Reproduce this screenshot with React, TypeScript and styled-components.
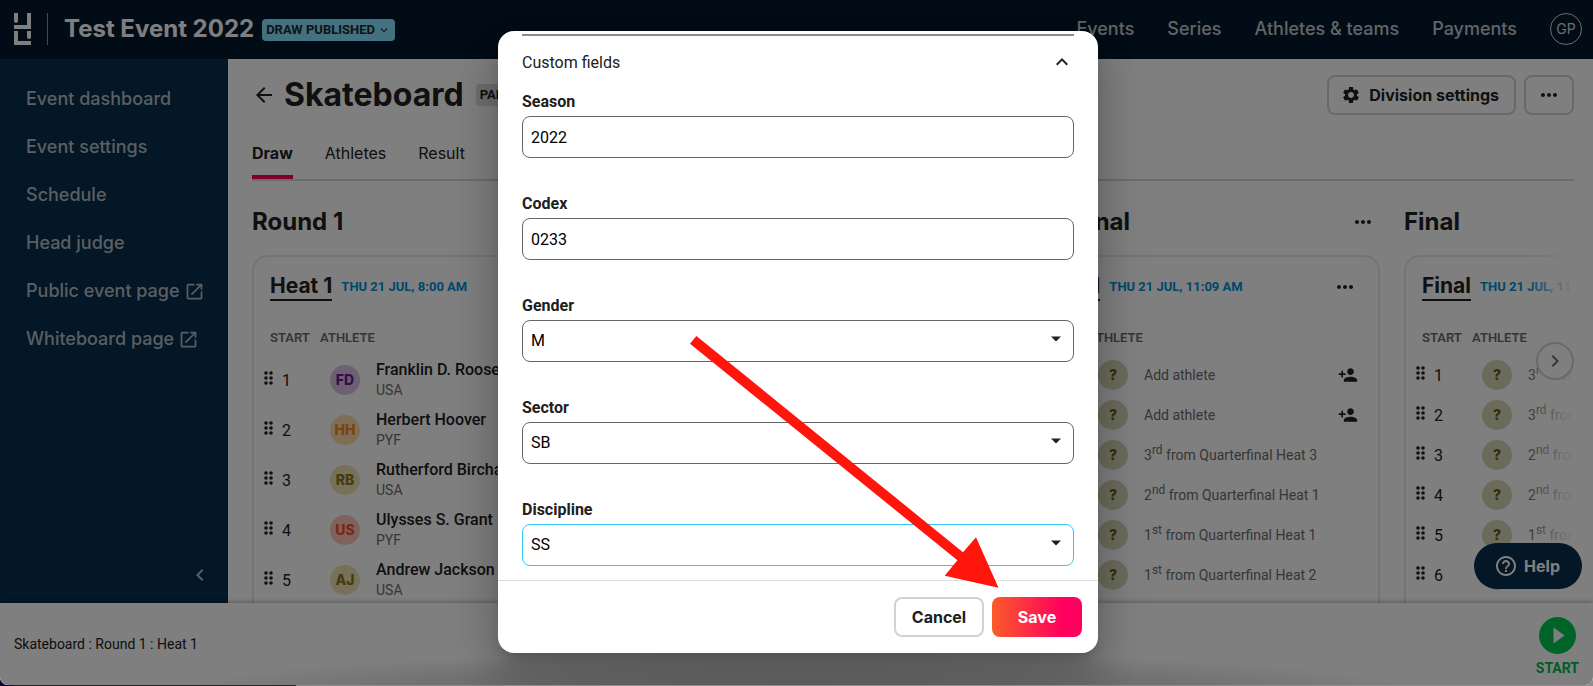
import React from "react";
import styled, { createGlobalStyle, css } from "styled-components";
import {
  MdSettings,
  MdPersonAdd,
  MdOpenInNew,
  MdArrowBack,
  MdMoreHoriz,
  MdChevronLeft,
  MdChevronRight,
  MdExpandLess,
  MdExpandMore,
  MdHelpOutline,
} from "react-icons/md";

const inter = `Inter, "Liberation Sans", sans-serif`;
const roboto = `Roboto, "Liberation Sans", sans-serif`;

const GlobalStyle = createGlobalStyle`
  *, *::before, *::after { box-sizing: border-box; }
  body { margin: 0; overflow: hidden; font-family: ${roboto}; font-size: 16px; color: #202020; }
  button { font: inherit; color: inherit; background: none; border: 0; padding: 0; cursor: pointer; }
  a { color: inherit; text-decoration: none; }
  h1, h2, h3, p { margin: 0; }
  svg { display: block; flex: none; }
`;

const Desktop = styled.div`
  height: 100vh;
  padding-bottom: 1px;
  background: linear-gradient(to right, #12082c 12px, #26262c 16px, #26262c 296px, #8c8c8c 296px);
`;

const AppWindow = styled.div`
  position: relative;
  display: grid;
  grid-template-rows: 59px minmax(0, 1fr) 82px;
  height: 100%;
  overflow: hidden;
  border-radius: 0 0 8px 8px;
  background: #fff;
`;

const Header = styled.header`
  display: flex;
  align-items: center;
  padding: 0 11px 2px 14px;
  background: #04182c;
  color: #fff;
  font-family: ${inter};
`;

const Divider = styled.span`
  width: 1px;
  height: 32px;
  margin: 0 16px 0 16px;
  background: #8d949c;
`;

const EventTitle = styled.h1`
  font-size: 24px;
  line-height: 32px;
  font-weight: 700;
  white-space: nowrap;
`;

const StatusBadge = styled.button`
  display: flex;
  align-items: center;
  gap: 2px;
  height: 22px;
  margin: 2px 0 0 8px;
  padding: 0 4px 0 4px;
  border-radius: 4px;
  background: #88e2ff;
  color: #20282c;
  font: 700 13px/22px ${roboto};
  white-space: nowrap;
`;

const TopNav = styled.nav`
  display: flex;
  align-items: center;
  gap: 33px;
  margin-left: auto;
  font-size: 18px;
  line-height: 24px;
  font-weight: 500;
  color: #c4c8cc;
  white-space: nowrap;
`;

const UserButton = styled.button`
  width: 32px;
  height: 32px;
  border: 1px solid #d6d9dc;
  border-radius: 50%;
  font: 400 14px/20px ${inter};
  color: #d6d9dc;
`;

const Middle = styled.div`
  display: grid;
  grid-template-columns: 228px minmax(0, 1fr);
  min-height: 0;
`;

const Sidebar = styled.nav`
  display: flex;
  flex-direction: column;
  padding: 16px 16px 16px 26px;
  background: #062e4c;
  color: #b4bec8;
  font: 500 18px/24px ${inter};
`;

const SideLink = styled.a`
  display: flex;
  align-items: center;
  gap: 4px;
  height: 48px;
  white-space: nowrap;
`;

const CollapseButton = styled.button`
  align-self: flex-end;
  margin-top: auto;
`;

const Main = styled.main`
  display: flex;
  flex-direction: column;
  min-width: 0;
  min-height: 0;
  padding: 0 19px 0 24px;
`;

const TitleRow = styled.div`
  display: flex;
  align-items: center;
  padding-top: 16px;
  font-family: ${inter};
`;

const DivisionTitle = styled.h2`
  margin: 0 12px 0 8px;
  font-size: 32px;
  line-height: 40px;
  font-weight: 700;
`;

const Tag = styled.span`
  padding: 0 4px;
  border-radius: 4px;
  background: #dcdcdc;
  font: 700 13px/22px ${roboto};
`;

const Actions = styled.div`
  display: flex;
  gap: 8px;
  margin-left: auto;
`;

const OutlineButton = styled.button<{ $square?: boolean }>`
  display: flex;
  align-items: center;
  justify-content: center;
  gap: 8px;
  height: 40px;
  padding: 0 ${(p) => (p.$square ? 11 : 15)}px 0 ${(p) => (p.$square ? 11 : 12)}px;
  border: 2px solid #d2d2d2;
  border-radius: 8px;
  font: 700 16px/24px ${inter};
  white-space: nowrap;
`;

const Tabs = styled.nav`
  display: flex;
  gap: 32px;
  height: 66px;
  border-bottom: 2px solid #d8d8d8;
  font-family: ${inter};
  line-height: 24px;
`;

const Tab = styled.a<{ $active?: boolean }>`
  padding-top: 26px;
  ${(p) =>
    p.$active &&
    css`
      font-weight: 700;
      border-bottom: 4px solid #ff005e;
    `}
`;

const Board = styled.div`
  position: relative;
  flex: 1;
  display: flex;
  gap: 24px;
  min-height: 0;
  overflow: hidden;
`;

const BoardFade = styled.div`
  position: absolute;
  top: 0;
  right: 0;
  bottom: 0;
  width: 48px;
  background: linear-gradient(to right, rgba(255, 255, 255, 0), #fff);
`;

const NextButton = styled.button`
  position: absolute;
  top: 161px;
  right: 0;
  display: flex;
  align-items: center;
  justify-content: center;
  width: 38px;
  height: 38px;
  border: 2px solid #d2d2d2;
  border-radius: 50%;
  background: #fff;
  color: #707070;
`;

const RoundColumn = styled.section`
  flex: none;
  display: flex;
  flex-direction: column;
  width: 360px;
`;

const RoundHead = styled.div`
  flex: none;
  display: flex;
  align-items: center;
  justify-content: space-between;
  height: 74px;
  padding: 8px 5px 0 0;
`;

const RoundTitle = styled.h2`
  font: 700 24px/32px ${inter};
`;

const HeatCard = styled.article`
  flex: 1 0 auto;
  padding: 16px 0 32px;
  border: 2px solid #e8e8e8;
  border-radius: 16px;
`;

const HeatHead = styled.div`
  display: flex;
  align-items: center;
  height: 28px;
  padding: 0 21px 0 16px;
`;

const HeatTitle = styled.a`
  border-bottom: 2px solid #202020;
  font: 700 21px/26px ${inter};
`;

const HeatDate = styled.span`
  margin-left: 9px;
  color: #008fd8;
  font-size: 13px;
  line-height: 20px;
  font-weight: 700;
`;

const HeadMenu = styled.button`
  margin-left: auto;
`;

const HeatTable = styled.table`
  width: 100%;
  border-collapse: collapse;
  table-layout: fixed;
`;

const ColumnHead = styled.th<{ $width?: number; $indent?: number }>`
  width: ${(p) => (p.$width ? `${p.$width}px` : "auto")};
  height: 54px;
  padding: 20px 0 0 ${(p) => p.$indent ?? 0}px;
  text-align: left;
  font-size: 13px;
  line-height: 16px;
  font-weight: 600;
  color: #6c6c6c;
`;

const AthleteRow = styled.tr<{ $height: number }>`
  height: ${(p) => p.$height}px;
`;

const Cell = styled.td`
  padding: 0;
  vertical-align: middle;
`;

const StartCell = styled.div`
  display: flex;
  align-items: center;
  gap: 9px;
  padding-left: 10px;
`;

const DragHandle = styled.svg`
  margin-bottom: 5px;
  fill: #202020;
`;

const AthleteCell = styled.div`
  display: flex;
  align-items: center;
  gap: 16px;
  padding: 0 20px 0 10px;
  white-space: nowrap;
`;

const Avatar = styled.span<{ $bg: string; $fg: string }>`
  flex: none;
  width: 30px;
  border-radius: 50%;
  background: ${(p) => p.$bg};
  color: ${(p) => p.$fg};
  font: 800 14px/30px ${inter};
  text-align: center;
`;

const AthleteName = styled.div`
  line-height: 20px;
  font-weight: 500;
`;

const Country = styled.div`
  font-size: 14px;
  line-height: 20px;
  color: #6c6c6c;
`;

const Placeholder = styled.span`
  flex: 1;
  font-size: 14px;
  line-height: 20px;
  color: #6c6c6c;

  sup {
    line-height: 0;
    font-size: 12px;
  }
`;

const FooterBar = styled.footer`
  position: relative;
  display: flex;
  align-items: center;
  justify-content: space-between;
  padding: 0 14px;
  background: radial-gradient(ellipse 38% 32px at 50% 100%, #c8c8c8 0%, #dcdcdc 50%, #fff 100%);
  box-shadow: 0 -1px 5px rgba(0, 0, 0, 0.3);
  font-size: 14px;
`;

const StartButton = styled.button`
  display: flex;
  flex-direction: column;
  align-items: center;
  gap: 4px;
  padding-top: 6px;
  color: #00b84c;
  font-size: 14px;
  line-height: 20px;
  font-weight: 700;
`;

const HelpButton = styled.button`
  position: absolute;
  right: 11px;
  bottom: 96px;
  display: flex;
  align-items: center;
  gap: 6px;
  height: 46px;
  padding: 0 22px 0 20px;
  border-radius: 23px;
  background: #062e4c;
  color: #fff;
  font: 700 16px/24px ${inter};
`;

const Scrim = styled.div`
  position: absolute;
  inset: 0;
  display: flex;
  align-items: center;
  justify-content: center;
  padding: 31px 0 32px 3px;
  background: rgba(0, 0, 0, 0.5);
`;

const Dialog = styled.section`
  position: relative;
  display: flex;
  flex-direction: column;
  width: 600px;
  max-height: 100%;
  border-radius: 16px;
  background: #fff;
  box-shadow: 0 11px 15px -7px rgba(0, 0, 0, 0.2), 0 24px 38px 3px rgba(0, 0, 0, 0.14),
    0 9px 46px 8px rgba(0, 0, 0, 0.12);
`;

const DialogBody = styled.form`
  display: flex;
  flex-direction: column;
  min-height: 0;
  overflow: hidden;
  padding: 3px 24px 14px;
  border-radius: 16px 16px 0 0;
`;

const SectionToggle = styled.button`
  flex: none;
  display: flex;
  align-items: center;
  justify-content: space-between;
  height: 54px;
  border-top: 2px solid #8c8c8c;
`;

const FieldList = styled.div`
  display: flex;
  flex-direction: column;
  gap: 32px;
`;

const Field = styled.div`
  display: flex;
  flex-direction: column;
  gap: 2px;
`;

const FieldLabel = styled.label`
  padding-top: 2px;
  line-height: 24px;
  font-weight: 700;
`;

const controlStyle = css<{ $focused?: boolean }>`
  appearance: none;
  display: block;
  width: 100%;
  height: 42px;
  padding: 0 8px;
  border: 1px solid ${(p) => (p.$focused ? "#2fc8f5" : "#666")};
  border-radius: 8px;
  outline: 0;
  background: #fff;
  color: #000;
  font: 400 16px/24px ${roboto};
`;

const TextInput = styled.input`
  ${controlStyle}
`;

const SelectInput = styled.select<{ $focused?: boolean }>`
  ${controlStyle}
`;

const SelectWrap = styled.div`
  position: relative;
`;

const Caret = styled.svg`
  position: absolute;
  top: 16px;
  right: 13px;
  pointer-events: none;
`;

const DialogFooter = styled.div`
  flex: none;
  display: flex;
  justify-content: flex-end;
  gap: 8px;
  padding: 16px;
  border-top: 1px solid #dcdcdc;
`;

const DialogButton = styled.button<{ $primary?: boolean }>`
  width: 90px;
  height: 40px;
  border-radius: 8px;
  border: ${(p) => (p.$primary ? "0" : "2px solid #d2d2d2")};
  background: ${(p) => (p.$primary ? "linear-gradient(to right, #fb5b29, #ff005e 78%)" : "#fff")};
  color: ${(p) => (p.$primary ? "#fff" : "#202020")};
  font: 700 16px/24px ${inter};
`;

const PointerArrow = styled.svg`
  position: absolute;
  top: 300px;
  left: 190px;
  pointer-events: none;
`;

type Entry = {
  start: number;
  initials?: string;
  bg?: string;
  fg?: string;
  name?: string;
  country?: string;
  place?: [string, string, string];
};

type Round = { title: string; heat: string; date: string; entries: Entry[] };

const rounds: Round[] = [
  {
    title: "Round 1",
    heat: "Heat 1",
    date: "THU 21 JUL, 8:00 AM",
    entries: [
      { start: 1, initials: "FD", bg: "#d8c0e4", fg: "#6a1b9a", name: "Franklin D. Roosevelt", country: "USA" },
      { start: 2, initials: "HH", bg: "#ffdcac", fg: "#f08a1c", name: "Herbert Hoover", country: "PYF" },
      { start: 3, initials: "RB", bg: "#ece2b0", fg: "#8c7820", name: "Rutherford Birchard", country: "USA" },
      { start: 4, initials: "US", bg: "#ffc4b8", fg: "#f0502c", name: "Ulysses S. Grant", country: "PYF" },
      { start: 5, initials: "AJ", bg: "#ece2b0", fg: "#8c7820", name: "Andrew Jackson", country: "USA" },
    ],
  },
  { title: "Quarterfinal", heat: "Heat 1", date: "THU 21 JUL, 10:05 AM", entries: [] },
  {
    title: "Semifinal",
    heat: "Heat 1",
    date: "THU 21 JUL, 11:09 AM",
    entries: [
      { start: 1 },
      { start: 2 },
      { start: 3, place: ["3", "rd", "Quarterfinal Heat 3"] },
      { start: 4, place: ["2", "nd", "Quarterfinal Heat 1"] },
      { start: 5, place: ["1", "st", "Quarterfinal Heat 1"] },
      { start: 6, place: ["1", "st", "Quarterfinal Heat 2"] },
    ],
  },
  {
    title: "Final",
    heat: "Final",
    date: "THU 21 JUL, 11:30 AM",
    entries: [
      { start: 1, place: ["3", "rd", "Semifinal"] },
      { start: 2, place: ["3", "rd", "Semifinal"] },
      { start: 3, place: ["2", "nd", "Semifinal"] },
      { start: 4, place: ["2", "nd", "Semifinal"] },
      { start: 5, place: ["1", "st", "Semifinal"] },
      { start: 6, place: ["1", "st", "Semifinal"] },
    ],
  },
];

const Logo = () => (
  <svg width="17" height="32" viewBox="0 0 17 32" fill="#fff" aria-label="Home">
    <path d="M0 0h4v8a2 2 0 0 1-4 0zM13 0h4v16H0v-4h13zM0 18h4v10h13v4H0zM13 18h4v6a2 2 0 0 1-4 0z" />
  </svg>
);

const Dots = () => (
  <DragHandle width="9" height="14" viewBox="0 0 9 14">
    {[2, 7, 12].map((y) =>
      [2, 7].map((x) => <circle key={`${x}-${y}`} cx={x} cy={y} r="1.8" />)
    )}
  </DragHandle>
);

const EntryRow = ({ entry }: { entry: Entry }) => (
  <AthleteRow $height={entry.name ? 50 : 40}>
    <Cell>
      <StartCell>
        <Dots />
        {entry.start}
      </StartCell>
    </Cell>
    <Cell>
      <AthleteCell>
        <Avatar $bg={entry.bg ?? "#d6d6b8"} $fg={entry.fg ?? "#5e5e14"}>
          {entry.initials ?? "?"}
        </Avatar>
        {entry.name && (
          <div>
            <AthleteName>{entry.name}</AthleteName>
            <Country>{entry.country}</Country>
          </div>
        )}
        {!entry.name && entry.place && (
          <Placeholder>
            {entry.place[0]}
            <sup>{entry.place[1]}</sup> from {entry.place[2]}
          </Placeholder>
        )}
        {!entry.name && !entry.place && (
          <>
            <Placeholder>Add athlete</Placeholder>
            <MdPersonAdd size={20} />
          </>
        )}
      </AthleteCell>
    </Cell>
  </AthleteRow>
);

const options: Record<string, string[]> = {
  Gender: ["M", "W"],
  Sector: ["SB", "FS"],
  Discipline: ["SS", "BA"],
};

const SelectField = ({ label, focused }: { label: string; focused?: boolean }) => (
  <Field>
    <FieldLabel htmlFor={label}>{label}</FieldLabel>
    <SelectWrap>
      <SelectInput id={label} $focused={focused}>
        {options[label].map((o) => (
          <option key={o}>{o}</option>
        ))}
      </SelectInput>
      <Caret width="10" height="6" viewBox="0 0 10 6">
        <path d="M0 0.5h10L5 5.5z" fill="#202020" />
      </Caret>
    </SelectWrap>
  </Field>
);

const TextField = ({ label, value }: { label: string; value: string }) => (
  <Field>
    <FieldLabel htmlFor={label}>{label}</FieldLabel>
    <TextInput id={label} type="text" defaultValue={value} />
  </Field>
);

export default function App() {
  return (
    <Desktop>
      <GlobalStyle />
      <AppWindow>
        <Header>
          <Logo />
          <Divider />
          <EventTitle>Test Event 2022</EventTitle>
          <StatusBadge>
            DRAW PUBLISHED
            <MdExpandMore size={14} />
          </StatusBadge>
          <TopNav>
            <a href="#events">Events</a>
            <a href="#series">Series</a>
            <a href="#athletes">Athletes &amp; teams</a>
            <a href="#payments">Payments</a>
            <UserButton>GP</UserButton>
          </TopNav>
        </Header>

        <Middle>
          <Sidebar>
            <SideLink href="#dashboard">Event dashboard</SideLink>
            <SideLink href="#settings">Event settings</SideLink>
            <SideLink href="#schedule">Schedule</SideLink>
            <SideLink href="#judge">Head judge</SideLink>
            <SideLink href="#public">
              Public event page <MdOpenInNew size={21} />
            </SideLink>
            <SideLink href="#whiteboard">
              Whiteboard page <MdOpenInNew size={21} />
            </SideLink>
            <CollapseButton aria-label="Collapse menu">
              <MdChevronLeft size={24} />
            </CollapseButton>
          </Sidebar>

          <Main>
            <TitleRow>
              <button aria-label="Back">
                <MdArrowBack size={24} />
              </button>
              <DivisionTitle>Skateboard</DivisionTitle>
              <Tag>PARTIAL</Tag>
              <Actions>
                <OutlineButton>
                  <MdSettings size={20} />
                  Division settings
                </OutlineButton>
                <OutlineButton $square aria-label="More">
                  <MdMoreHoriz size={24} />
                </OutlineButton>
              </Actions>
            </TitleRow>
            <Tabs>
              <Tab href="#draw" $active>
                Draw
              </Tab>
              <Tab href="#list">Athletes</Tab>
              <Tab href="#result">Result</Tab>
            </Tabs>
            <Board>
              {rounds.map((round) => (
                <RoundColumn key={round.title}>
                  <RoundHead>
                    <RoundTitle>{round.title}</RoundTitle>
                    <button aria-label="Round menu">
                      <MdMoreHoriz size={24} />
                    </button>
                  </RoundHead>
                  <HeatCard>
                    <HeatHead>
                      <HeatTitle href="#heat">{round.heat}</HeatTitle>
                      <HeatDate>{round.date}</HeatDate>
                      <HeadMenu aria-label="Heat menu">
                        <MdMoreHoriz size={24} />
                      </HeadMenu>
                    </HeatHead>
                    <HeatTable>
                      <thead>
                        <tr>
                          <ColumnHead $width={66} $indent={16}>
                            START
                          </ColumnHead>
                          <ColumnHead>ATHLETE</ColumnHead>
                        </tr>
                      </thead>
                      <tbody>
                        {round.entries.map((entry) => (
                          <EntryRow key={entry.start} entry={entry} />
                        ))}
                      </tbody>
                    </HeatTable>
                  </HeatCard>
                </RoundColumn>
              ))}
              <BoardFade />
              <NextButton aria-label="Next rounds">
                <MdChevronRight size={24} />
              </NextButton>
            </Board>
          </Main>
        </Middle>

        <FooterBar>
          <p>Skateboard : Round 1 : Heat 1</p>
          <StartButton>
            <svg width="37" height="37" viewBox="0 0 37 37">
              <circle cx="18.5" cy="18.5" r="18.5" fill="#00c853" />
              <path d="M14.5 10.5v16l11-8z" fill="#fff" />
            </svg>
            START
          </StartButton>
        </FooterBar>

        <HelpButton>
          <MdHelpOutline size={24} />
          Help
        </HelpButton>

        <Scrim>
          <Dialog role="dialog" aria-label="Division settings">
            <DialogBody>
              <SectionToggle type="button">
                Custom fields
                <MdExpandLess size={24} />
              </SectionToggle>
              <FieldList>
                <TextField label="Season" value="2022" />
                <TextField label="Codex" value="0233" />
                <SelectField label="Gender" />
                <SelectField label="Sector" />
                <SelectField label="Discipline" focused />
              </FieldList>
            </DialogBody>
            <DialogFooter>
              <DialogButton>Cancel</DialogButton>
              <DialogButton $primary>Save</DialogButton>
            </DialogFooter>
            <PointerArrow width="320" height="264" viewBox="0 0 320 264">
              <path
                d="M2 12.7 8.4 5 275 221.3 288 206.3 310.5 256.7 256.7 244.7 269.4 229.3z"
                fill="#ff150c"
              />
            </PointerArrow>
          </Dialog>
        </Scrim>
      </AppWindow>
    </Desktop>
  );
}
